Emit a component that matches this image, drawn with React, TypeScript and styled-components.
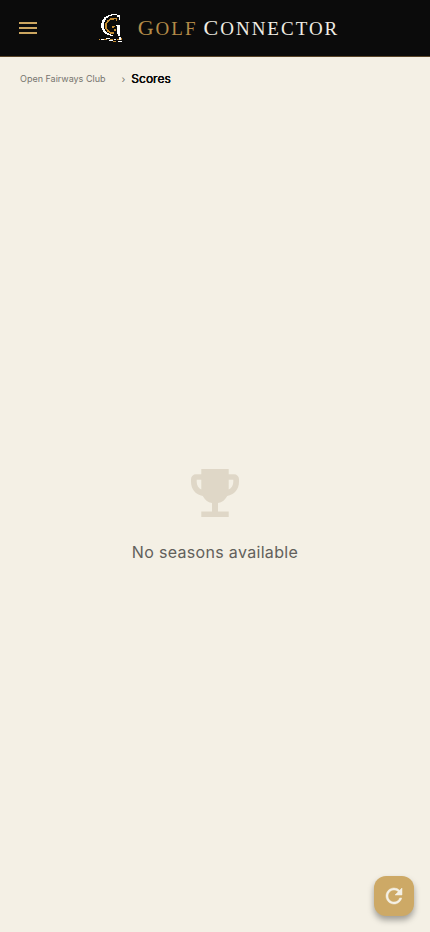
import React from "react";
import styled, { createGlobalStyle } from "styled-components";
import { MdMenu, MdRefresh } from "react-icons/md";

const GlobalStyle = createGlobalStyle`
  * { box-sizing: border-box; }
  html, body, #root { height: 100%; }
  body { margin: 0; background: #f4f0e5; font-family: Inter, sans-serif; }
`;

const Page = styled.div`
  display: flex;
  flex-direction: column;
  min-height: 100%;
`;

const Header = styled.header`
  display: grid;
  grid-template-columns: 40px 1fr 32px;
  align-items: center;
  height: 57px;
  padding: 0 8px;
  background: #0b0b0b;
  border-bottom: 1px solid #5a4528;
`;

const MenuButton = styled.button`
  display: flex;
  align-items: center;
  justify-content: center;
  width: 40px;
  height: 40px;
  padding: 0;
  border: 0;
  background: none;
  color: #cca660;
`;

const Brand = styled.div`
  display: flex;
  align-items: center;
  justify-content: center;
  gap: 15px;
`;

const Wordmark = styled.h1`
  display: flex;
  gap: 6px;
  margin: 0;
  font: 400 19px/28px "Liberation Serif", serif;
  letter-spacing: 2px;
  text-transform: uppercase;
`;

const Word = styled.span<{ $gold?: boolean }>`
  display: block;
  color: ${({ $gold }) => ($gold ? "#b58b48" : "#f0ede4")};
  &::first-letter { font-size: 22px; }
`;

const Breadcrumb = styled.nav`
  display: flex;
  align-items: center;
  height: 44px;
  padding: 0 20px;
  font-size: 12px;
  line-height: 16px;
`;

const ClubLink = styled.a`
  color: #77756f;
  font-size: 9px;
  text-decoration: none;
`;

const Separator = styled.span`
  margin: 0 6px 0 16px;
  color: #77756f;
  font-size: 10px;
`;

const Current = styled.span`
  color: #0b0b0b;
  font-weight: 400;
  text-shadow: 0 0 currentColor, 0 0 currentColor;
`;

const Empty = styled.main`
  display: flex;
  flex: 1;
  flex-direction: column;
  align-items: center;
  justify-content: center;
  gap: 24px;
  padding-bottom: 2px;
`;

const Message = styled.p`
  margin: 0;
  color: #62605b;
  font-size: 16px;
  line-height: 22px;
  letter-spacing: 0.02em;
`;

const RefreshButton = styled.button`
  position: fixed;
  right: 16px;
  bottom: 16px;
  display: flex;
  align-items: center;
  justify-content: center;
  width: 40px;
  height: 40px;
  padding: 0;
  border: 0;
  border-radius: 12px;
  background: #cda966;
  color: #f4f0e5;
  box-shadow: 0 4px 6px rgba(0, 0, 0, 0.35);

  path:last-child {
    stroke: currentColor;
    stroke-width: 0.5;
  }
`;

const Logo = () => (
  <svg width="24" height="28" viewBox="0 0 24 28" fill="none" shapeRendering="crispEdges" aria-hidden="true">
    <path
      d="M15 0C7 0 2 5 2 11s4 11 12 11v-1C8 20 5 17 5 11S9 2 15 1zM15 0h3v1h-3zM18 1h3v5h-1V3h-2zM17 11h4v11h-2v-2h-1v-8h-1z"
      fill="#fff"
    />
    <path d="M15 5h-3L9 7l-2 3v4l2 3 3 2h3" stroke="#c48c30" strokeWidth="1.500" />
    <path d="M15 4h3v3h-1V5h-2zM13 12h3v1h-1v1h-2zM15 15h2v2h-2z" fill="#c48c30" />
    <path d="M2 25h3v1H2zM7 24h4v1H7zM10 26h4v1h-4zM15 25h2v1h-2zM20 23h2v3h-2zM19 27h4v1h-4z" fill="#fff" />
    <path d="M0 25h1v1H0zM5 25h3v1H5zM11 25h3v1h-3zM14 27h3v1h-3zM18 25h2v1h-2zM22 24h1v2h-1z" fill="#c48c30" />
  </svg>
);

const Trophy = () => (
  <svg width="48" height="48" viewBox="0 0 48 48" aria-hidden="true">
    <path
      fill="#dfd7c7"
      fillRule="evenodd"
      d="M10.3 0h27.4v5.3H43a5 5 0 0 1 5 5v2.4c0 7.500-4.800 13-11.800 14.200-1.900 3.800-5 6.400-9.200 7.200v8.400h10.700V48H10.3v-5.500H21v-8.400c-4.200-.8-7.300-3.400-9.200-7.200C4.800 25.700 0 20.200 0 12.700v-2.400a5 5 0 0 1 5-5h5.300zM10.300 10.700H5.700v2c0 3.600 1.700 6.400 4.600 7.800zM37.700 10.700v9.800c2.900-1.400 4.600-4.200 4.600-7.800v-2z"
    />
  </svg>
);

export default function App() {
  return (
    <Page>
      <GlobalStyle />
      <Header>
        <MenuButton type="button" aria-label="Open menu"><MdMenu size={24} /></MenuButton>
        <Brand>
          <Logo />
          <Wordmark>
            <Word $gold>Golf</Word>
            <Word>Connector</Word>
          </Wordmark>
        </Brand>
      </Header>
      <Breadcrumb aria-label="Breadcrumb">
        <ClubLink href="#club">Open Fairways Club</ClubLink>
        <Separator aria-hidden="true">›</Separator>
        <Current aria-current="page">Scores</Current>
      </Breadcrumb>
      <Empty>
        <Trophy />
        <Message>No seasons available</Message>
      </Empty>
      <RefreshButton type="button" aria-label="Refresh scores"><MdRefresh size={24} /></RefreshButton>
    </Page>
  );
}
